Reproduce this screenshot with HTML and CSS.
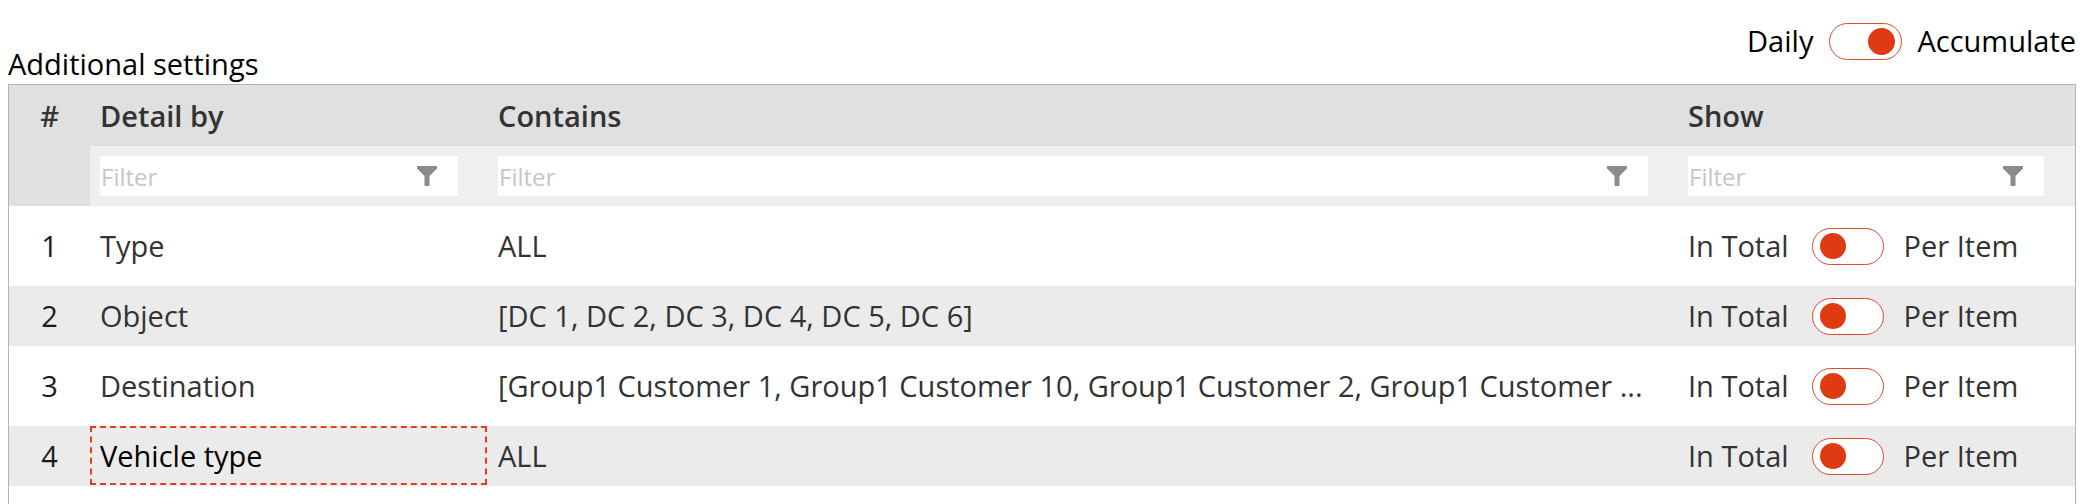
FILE: index.html
```html
<!DOCTYPE html>
<html lang="en">
<head>
<meta charset="utf-8">
<title>Additional settings</title>
<link rel="stylesheet" href="styles.css">
</head>
<body>
<div class="page">
  <div class="topbar">
    <div class="title">Additional settings</div>
    <div class="mode">
      <span class="mode-label">Daily</span>
      <span class="toggle toggle-big on"><span class="knob"></span></span>
      <span class="mode-label">Accumulate</span>
    </div>
  </div>
  <div class="table">
    <div class="row head">
      <div class="cell num">#</div>
      <div class="cell">Detail by</div>
      <div class="cell">Contains</div>
      <div class="cell">Show</div>
    </div>
    <div class="row filters">
      <div class="cell num"></div>
      <div class="cell fcell"><div class="filter"><input type="text" placeholder="Filter"><svg class="funnel" viewBox="0 0 20 20"><path d="M0 0H20V2.5L12.5 10V20H7.5V10L0 2.5Z"/></svg></div></div>
      <div class="cell fcell"><div class="filter"><input type="text" placeholder="Filter"><svg class="funnel" viewBox="0 0 20 20"><path d="M0 0H20V2.5L12.5 10V20H7.5V10L0 2.5Z"/></svg></div></div>
      <div class="cell fcell last"><div class="filter"><input type="text" placeholder="Filter"><svg class="funnel" viewBox="0 0 20 20"><path d="M0 0H20V2.5L12.5 10V20H7.5V10L0 2.5Z"/></svg></div></div>
    </div>
    <div class="row data odd">
      <div class="cell num">1</div>
      <div class="cell">Type</div>
      <div class="cell text">ALL</div>
      <div class="cell show"><span>In Total</span><span class="toggle"><span class="knob"></span></span><span>Per Item</span></div>
    </div>
    <div class="row data even">
      <div class="cell num">2</div>
      <div class="cell">Object</div>
      <div class="cell text">[DC 1, DC 2, DC 3, DC 4, DC 5, DC 6]</div>
      <div class="cell show"><span>In Total</span><span class="toggle"><span class="knob"></span></span><span>Per Item</span></div>
    </div>
    <div class="row data odd">
      <div class="cell num">3</div>
      <div class="cell">Destination</div>
      <div class="cell text">[Group1 Customer 1, Group1 Customer 10, Group1 Customer 2, Group1 Customer ...</div>
      <div class="cell show"><span>In Total</span><span class="toggle"><span class="knob"></span></span><span>Per Item</span></div>
    </div>
    <div class="row data even">
      <div class="cell num">4</div>
      <div class="cell focused">Vehicle type</div>
      <div class="cell text">ALL</div>
      <div class="cell show"><span>In Total</span><span class="toggle"><span class="knob"></span></span><span>Per Item</span></div>
    </div>
  </div>
</div>
</body>
</html>
```
FILE: styles.css
```css
html, body {
  margin: 0;
  padding: 0;
  overflow: hidden;
  background: #ffffff;
}

.page {
  height: 504px;
  box-sizing: border-box;
  padding: 22px 18px 0 8px;
  display: flex;
  flex-direction: column;
  font-family: "Open Sans", "Noto Sans", sans-serif;
  font-size: 29px;
  color: #333333;
}

.topbar {
  display: flex;
  align-items: flex-end;
  justify-content: space-between;
}

.title {
  color: #000000;
  line-height: 38px;
}

.mode {
  display: flex;
  align-items: center;
  margin-bottom: 23px;
  color: #000000;
  line-height: 38px;
}

.toggle {
  box-sizing: border-box;
  display: flex;
  align-items: center;
  width: 72px;
  height: 37px;
  border: 1px solid #e2492a;
  border-radius: 19px;
  background: #ffffff;
  padding: 0 7px;
  flex: none;
}

.toggle .knob {
  width: 26px;
  height: 26px;
  border-radius: 50%;
  background: #e03a12;
}

.toggle-big {
  width: 73px;
  margin: 0 15px 0 16px;
  padding: 0 6px;
}

.toggle-big .knob {
  width: 27px;
  height: 27px;
}

.toggle.on {
  justify-content: flex-end;
}

.table {
  flex: 1;
  margin-top: 1px;
  margin-bottom: -2px;
  border: 1px solid #b4b4b4;
}

.row {
  display: grid;
  grid-template-columns: 81px 398px 1190px 1fr;
  align-items: stretch;
}

.cell {
  display: flex;
  align-items: center;
  padding: 0 10px;
  min-width: 0;
  line-height: 38px;
  white-space: nowrap;
}

.cell.num {
  justify-content: center;
  padding: 0;
  color: #1a1a1a;
}

.head {
  height: 61px;
  background: #e0e0e0;
  font-weight: 600;
}

.head .cell.num {
  color: #333333;
}

.filters {
  height: 60px;
  background: #efefef;
}

.filters .cell.num {
  background: #e0e0e0;
}

.fcell {
  padding: 0 30px 0 10px;
}

.fcell.last {
  padding-right: 31px;
}

.filter {
  flex: 1;
  height: 40px;
  background: #ffffff;
  display: flex;
  align-items: center;
  padding: 0 21px 0 0;
  gap: 10px;
  min-width: 0;
}

.filter input {
  flex: 1;
  min-width: 0;
  border: none;
  outline: none;
  background: transparent;
  font-family: "Open Sans", "Noto Sans", sans-serif;
  font-size: 24px;
  padding: 0 0 0 1px;
  margin: 0;
  height: 40px;
  color: #333333;
}

.filter input::placeholder {
  color: #c6c6c6;
}

.funnel {
  width: 20px;
  height: 20px;
  fill: #8c8c8c;
  flex: none;
}

.data.odd {
  height: 80px;
  background: #ffffff;
}

.data.even {
  height: 60px;
  background: #ebebeb;
}

.cell.text {
  display: block;
  align-self: center;
  overflow: hidden;
}

.cell.show .toggle {
  margin: 0 20px 0 23px;
}

.cell.focused {
  color: #000000;
  outline: 2px dashed #e0401a;
  outline-offset: -2px;
  margin: 0 1px 1px 0;
}
```
